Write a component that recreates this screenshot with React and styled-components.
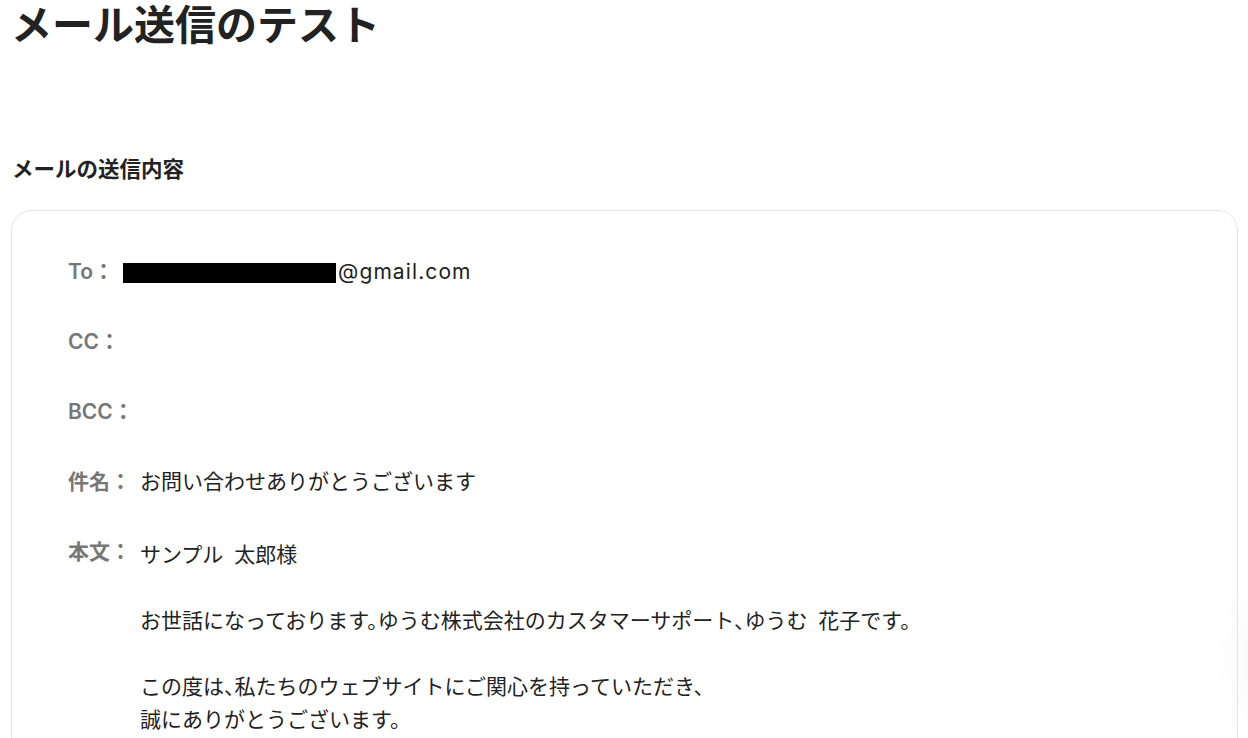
import React from 'react'
import styled, { createGlobalStyle } from 'styled-components'

const GlobalStyle = createGlobalStyle`
  html, body {
    margin: 0;
    padding: 0;
    background: #fff;
  }
  body {
    font-family: "Inter", "Noto Sans CJK JP", sans-serif;
    color: #222;
    overflow: hidden;
  }
`

const Page = styled.div`
  padding: 0 10px 0 11px;
`

const Title = styled.h1`
  margin: 0;
  font-size: 41px;
  line-height: 50px;
  font-weight: 700;
  color: #222;
`

const SectionTitle = styled.h2`
  margin: 104px 0 0 1px;
  font-size: 21.5px;
  line-height: 30px;
  font-weight: 700;
  color: #222;
`

const Card = styled.section`
  margin-top: 26px;
  border: 1px solid #e6e6e6;
  border-radius: 20px;
  padding: 44px 56px 40px;
  display: flex;
  flex-direction: column;
  gap: 37px;
  min-height: 600px;
`

const Row = styled.div`
  display: flex;
  align-items: flex-start;
  font-size: 21px;
  line-height: 33px;
  margin-top: ${p => p.$shift || 0}px;
`

const Label = styled.span`
  flex: none;
  color: #777;
  font-weight: 600;
  margin-right: 9px;
  margin-top: ${p => (p.$lift ? -3 : 0)}px;
`

const Value = styled.div`
  color: #222;
  white-space: pre-wrap;
  word-spacing: 5px;
  font-feature-settings: "halt";
`

const Email = styled.span`
  letter-spacing: 1.1px;
`

const Redacted = styled.span`
  display: inline-block;
  width: 213px;
  height: 20px;
  background: #000;
  vertical-align: -4px;
  margin-right: 2px;
`

const FloatShadow = styled.div`
  position: fixed;
  right: -150px;
  bottom: 10px;
  width: 140px;
  height: 140px;
  border-radius: 50%;
  background: #fff;
  box-shadow: 0 0 60px rgba(0, 0, 0, 0.07);
`

const body = `サンプル 太郎様

お世話になっております。ゆうむ株式会社のカスタマーサポート、ゆうむ 花子です。

この度は、私たちのウェブサイトにご関心を持っていただき、
誠にありがとうございます。`

export default function App() {
  return (
    <>
      <GlobalStyle />
      <Page>
        <Title>メール送信のテスト</Title>
        <SectionTitle>メールの送信内容</SectionTitle>
        <Card>
          <Row>
            <Label>To：</Label>
            <Value><Redacted /><Email>@gmail.com</Email></Value>
          </Row>
          <Row>
            <Label>CC：</Label>
          </Row>
          <Row>
            <Label>BCC：</Label>
          </Row>
          <Row>
            <Label>件名：</Label>
            <Value>お問い合わせありがとうございます</Value>
          </Row>
          <Row $shift={3}>
            <Label $lift>本文：</Label>
            <Value>{body}</Value>
          </Row>
        </Card>
      </Page>
      <FloatShadow />
    </>
  )
}
